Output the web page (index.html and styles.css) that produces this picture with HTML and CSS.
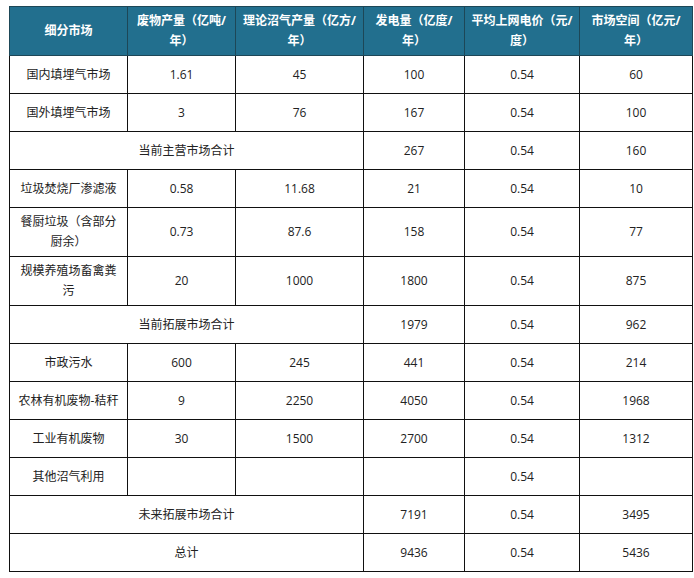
FILE: index.html
```html
<!DOCTYPE html>
<html lang="zh-CN">
<head>
<meta charset="utf-8">
<title>细分市场</title>
<link rel="stylesheet" href="styles.css">
</head>
<body>
<table class="market">
  <colgroup>
    <col class="c1"><col class="c2"><col class="c3"><col class="c4"><col class="c5"><col class="c6">
  </colgroup>
  <thead>
    <tr class="tall">
      <th>细分市场</th>
      <th>废物产量（亿吨/<br>年）</th>
      <th>理论沼气产量（亿方/<br>年）</th>
      <th>发电量（亿度/<br>年）</th>
      <th>平均上网电价（元/<br>度）</th>
      <th>市场空间（亿元/<br>年）</th>
    </tr>
  </thead>
  <tbody>
    <tr class="short"><td>国内填埋气市场</td><td>1.61</td><td>45</td><td>100</td><td>0.54</td><td>60</td></tr>
    <tr class="short"><td>国外填埋气市场</td><td>3</td><td>76</td><td>167</td><td>0.54</td><td>100</td></tr>
    <tr class="short"><td colspan="3">当前主营市场合计</td><td>267</td><td>0.54</td><td>160</td></tr>
    <tr class="short"><td>垃圾焚烧厂渗滤液</td><td>0.58</td><td>11.68</td><td>21</td><td>0.54</td><td>10</td></tr>
    <tr class="tall"><td>餐厨垃圾（含部分<br>厨余）</td><td>0.73</td><td>87.6</td><td>158</td><td>0.54</td><td>77</td></tr>
    <tr class="tall"><td>规模养殖场畜禽粪<br>污</td><td>20</td><td>1000</td><td>1800</td><td>0.54</td><td>875</td></tr>
    <tr class="short"><td colspan="3">当前拓展市场合计</td><td>1979</td><td>0.54</td><td>962</td></tr>
    <tr class="short"><td>市政污水</td><td>600</td><td>245</td><td>441</td><td>0.54</td><td>214</td></tr>
    <tr class="short"><td>农林有机废物-秸秆</td><td>9</td><td>2250</td><td>4050</td><td>0.54</td><td>1968</td></tr>
    <tr class="short"><td>工业有机废物</td><td>30</td><td>1500</td><td>2700</td><td>0.54</td><td>1312</td></tr>
    <tr class="short"><td>其他沼气利用</td><td></td><td></td><td></td><td>0.54</td><td></td></tr>
    <tr class="short"><td colspan="3">未来拓展市场合计</td><td>7191</td><td>0.54</td><td>3495</td></tr>
    <tr class="short"><td colspan="3">总计</td><td>9436</td><td>0.54</td><td>5436</td></tr>
  </tbody>
</table>
</body>
</html>
```

FILE: styles.css
```css
html, body {
  background: #ffffff;
}
body {
  margin: 0;
  padding: 6px 0 0 9px;
  font-family: "Open Sans", "Noto Sans CJK SC", sans-serif;
  font-size: 12px;
  color: #222222;
}
.market {
  border-collapse: collapse;
  table-layout: fixed;
  width: 683px;
}
.c1 { width: 118px; }
.c2 { width: 108px; }
.c3 { width: 128px; }
.c4 { width: 101px; }
.c5 { width: 115px; }
.c6 { width: 113px; }
.market th,
.market td {
  border: 1px solid #111111;
  padding: 0 6px;
  text-align: center;
  vertical-align: middle;
  line-height: 20px;
}
.market th {
  background: #226f8e;
  color: #ffffff;
  font-weight: bold;
  border-color: #1d4757;
}
.short { height: 38px; }
.tall { height: 49px; }
```
